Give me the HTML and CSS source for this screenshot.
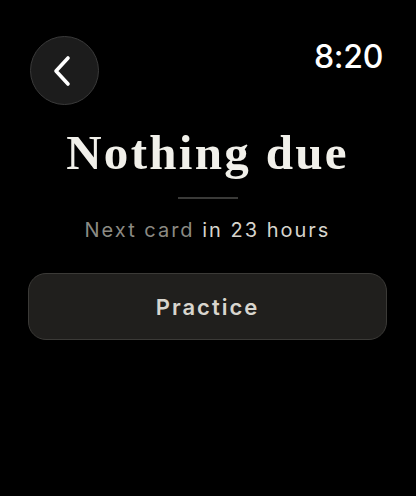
FILE: index.html
```html
<!DOCTYPE html>
<html lang="en">
<head>
<meta charset="utf-8">
<title>Nothing due</title>
<link rel="stylesheet" href="styles.css">
</head>
<body>
<div class="screen">
  <header class="top">
    <button class="back" aria-label="Back">
      <svg width="22" height="32" viewBox="0 0 22 32" aria-hidden="true">
        <path d="M17 3 L5 16 L17 29" fill="none" stroke="#ffffff" stroke-width="3.6" stroke-linecap="round" stroke-linejoin="round"/>
      </svg>
    </button>
    <div class="time">8:20</div>
  </header>
  <main class="content">
    <h1 class="title">Nothing due</h1>
    <div class="divider"></div>
    <p class="sub"><span class="muted">Next card</span> in 23 hours</p>
    <button class="practice">Practice</button>
  </main>
</div>
</body>
</html>
```
FILE: styles.css
```css
html, body {
  margin: 0;
  padding: 0;
  background: #000;
}
.screen {
  width: 416px;
  height: 496px;
  box-sizing: border-box;
  padding: 36px 33px 0 30px;
  font-family: Inter, "Noto Sans", sans-serif;
}
.top {
  display: flex;
  justify-content: space-between;
  align-items: flex-start;
}
.back {
  width: 69px;
  height: 69px;
  border-radius: 50%;
  background: #1c1c1c;
  border: 1.5px solid #3a3a3a;
  box-sizing: border-box;
  padding: 0;
  display: flex;
  align-items: center;
  justify-content: center;
}
.back svg {
  margin-left: -6px;
  margin-top: 1px;
}
.time {
  color: #fff;
  font-size: 32px;
  font-weight: 500;
  line-height: 1;
  margin-top: 5px;
  letter-spacing: -0.3px;
}
.content {
  display: flex;
  flex-direction: column;
  align-items: center;
  margin-right: -4px;
  margin-left: -2px;
}
.title {
  margin: 20px 0 0 0;
  font-family: "Liberation Serif", serif;
  font-weight: 700;
  font-size: 49px;
  line-height: 56px;
  color: #f1f0ea;
  letter-spacing: 2.3px;
}
.divider {
  width: 60px;
  height: 2px;
  background: #3a3a38;
  margin-top: 16px;
}
.sub {
  margin: 19px 0 0 0;
  font-size: 20px;
  line-height: 24px;
  letter-spacing: 2px;
  color: #d6d4cd;
}
.muted {
  color: #8b8a83;
}
.practice {
  margin-top: 31px;
  align-self: stretch;
  height: 67px;
  box-sizing: border-box;
  border-radius: 18px;
  background: #201f1d;
  border: 1.5px solid #3b3a37;
  color: #d8d5ce;
  font-family: Inter, "Noto Sans", sans-serif;
  font-size: 22px;
  font-weight: 600;
  letter-spacing: 2px;
  padding: 0;
}
```
